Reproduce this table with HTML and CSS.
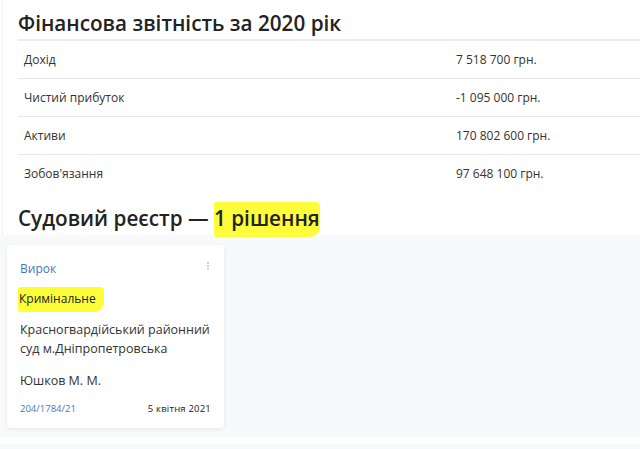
FILE: index.html
```html
<!DOCTYPE html>
<html lang="uk">
<head>
<meta charset="utf-8">
<link rel="stylesheet" href="styles.css">
</head>
<body>
<section class="top">
  <h2 class="title">Фінансова звітність за 2020 рік</h2>
  <div class="table">
    <div class="row"><span class="label">Дохід</span><span class="value">7 518 700 грн.</span></div>
    <div class="row"><span class="label">Чистий прибуток</span><span class="value">-1 095 000 грн.</span></div>
    <div class="row"><span class="label">Активи</span><span class="value">170 802 600 грн.</span></div>
    <div class="row"><span class="label">Зобов'язання</span><span class="value">97 648 100 грн.</span></div>
  </div>
  <h2 class="title title2">Судовий реєстр — <mark class="hl">1 рішення</mark></h2>
</section>
<section class="court">
  <article class="card">
    <div class="card-head">
      <a class="kind">Вирок</a>
      <span class="kebab"><i></i><i></i><i></i></span>
    </div>
    <div class="cat"><mark class="hl2">Кримінальне</mark></div>
    <div class="court-name">Красногвардійський районний суд м.Дніпропетровська</div>
    <div class="judge">Юшков М. М.</div>
    <div class="card-foot">
      <a class="num">204/1784/21</a>
      <span class="date">5 квітня 2021</span>
    </div>
  </article>
</section>
<section class="next"></section>
</body>
</html>
```

FILE: styles.css
```css
html, body {
  margin: 0;
  padding: 0;
  background: #fff;
}
body {
  font-family: "Open Sans", "Noto Sans", sans-serif;
  color: #222;
  width: 640px;
  overflow: hidden;
}
.top {
  margin-left: 2px;
  border-left: 1px solid #f0f0f0;
  padding-left: 15px;
  padding-top: 7px;
  padding-bottom: 0;
}
.title {
  margin: 0;
  font-size: 20.7px;
  font-weight: 600;
  line-height: 32px;
  color: #222;
}
.table {
  border-top: 2px solid #ececec;
}
.row {
  display: flex;
  height: 37px;
  align-items: center;
  border-bottom: 1px solid #e6e6e6;
  font-size: 12px;
  color: #333;
}
.row:last-child {
  border-bottom: none;
}
.label {
  padding-left: 6px;
  width: 432px;
}
.value {
  flex: 1;
}
.title2 {
  margin-top: 9px;
  line-height: 34px;
}
.hl {
  background: #fdfd3a;
  color: #222;
  padding: 2px 0 5px;
  border-radius: 2px 4px 10px 3px;
}
.court {
  background: #f7f9fb;
  padding: 10px 7px 9px 7px;
  height: 183px;
}
.card {
  width: 217px;
  height: 183px;
  box-sizing: border-box;
  background: #fff;
  border-radius: 4px;
  box-shadow: 0 1px 4px rgba(0, 0, 0, 0.08);
  padding: 14px 10px 11px 13px;
  display: flex;
  flex-direction: column;
}
.card-head {
  display: flex;
  justify-content: space-between;
  align-items: flex-start;
}
.kind {
  color: #3f78c0;
  font-size: 12px;
  line-height: 20px;
}
.kebab {
  display: flex;
  flex-direction: column;
  gap: 1px;
  padding-top: 3px;
  padding-right: 5px;
}
.kebab i {
  display: block;
  width: 2px;
  height: 2px;
  background: #c4c4c4;
  border-radius: 1px;
}
.cat {
  margin-top: 10px;
  font-size: 12px;
  line-height: 20px;
  color: #222;
}
.hl2 {
  background: #fdfd3a;
  color: #222;
  padding: 3px 8px 5px 1px;
  margin-left: -2px;
  border-radius: 2px 4px 10px 2px;
}
.court-name {
  margin-top: 11px;
  font-size: 12.5px;
  line-height: 19px;
  color: #333;
}
.judge {
  margin-top: 13px;
  font-size: 12.5px;
  line-height: 20px;
  color: #333;
}
.card-foot {
  margin-top: auto;
  display: flex;
  justify-content: space-between;
  padding-right: 3px;
  font-size: 9.5px;
  line-height: 16px;
}
.num {
  color: #3f78c0;
}
.date {
  color: #222;
  letter-spacing: 0.2px;
}
.next {
  margin-top: 7px;
  background: #f7f9fb;
  height: 20px;
}
```
